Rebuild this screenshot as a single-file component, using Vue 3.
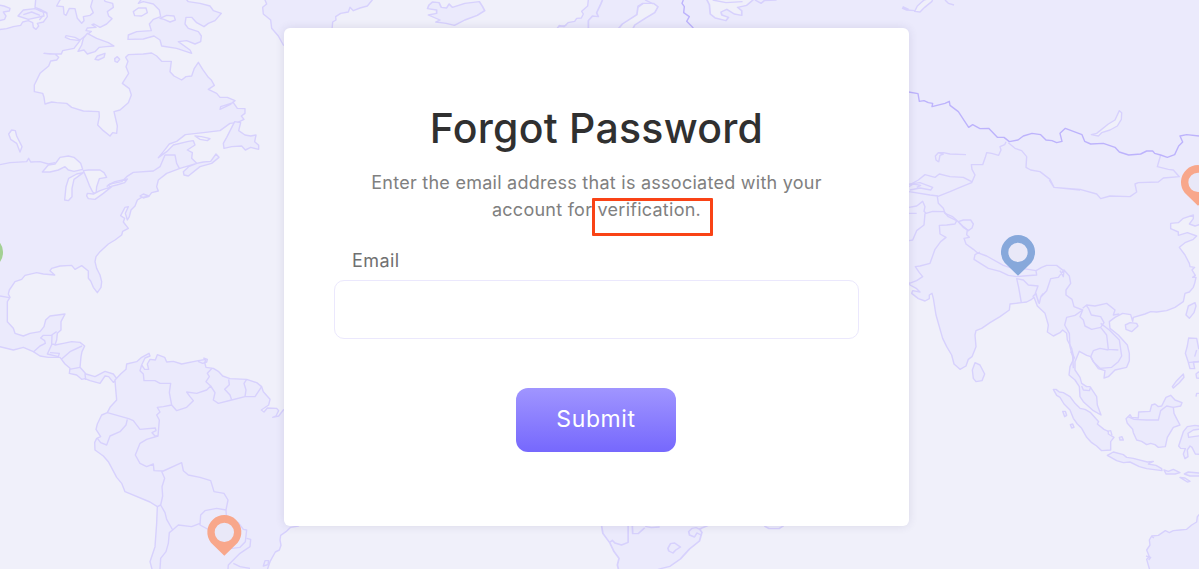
<template>
  <div class="page">
    <svg class="map" viewBox="0 0 3597 1707" aria-hidden="true">
      <g v-for="region in regions" :key="region.name" :transform="region.shift">
        <path v-for="d in region.land" :key="d" class="land" :d="d" />
        <path v-for="d in region.water" :key="d" class="water" :d="d" />
        <path v-for="d in region.borders" :key="d" class="border" :d="d" />
      </g>
      <path class="border strong" :d="russianBorder" />
      <g v-for="pin in pins" :key="pin.shift" :transform="pin.shift">
        <circle class="pin-hole" r="32" />
        <path
          :fill="pin.color"
          fill-rule="evenodd"
          d="M0 70 L-40 31 A51 51 0 1 1 40 31 Z M29 0 A29 29 0 1 0 -29 0 A29 29 0 1 0 29 0 Z"
        />
      </g>
    </svg>

    <form class="card" @submit.prevent>
      <h1 class="title">Forgot Password</h1>
      <p class="hint">
        Enter the email address that is associated with your<br />
        account for <span class="marked">verification.</span>
      </p>
      <label class="label" for="email">Email</label>
      <input id="email" v-model="email" class="input" type="email" />
      <button class="submit" type="submit">Submit</button>
    </form>
  </div>
</template>

<script setup>
import { ref } from 'vue'

const email = ref('')

const regions = [
  {
    name: 'north-america',
    shift: 'translate(0 0)',
    land: [
      'M-10 90 L20 86 40 80 62 76 68 66 85 62 98 68 100 82 108 88 116 78 112 70 130 66 142 50 140 38 125 30 105 22 107 0 V-10 H180 V0 L170 18 190 20 192 42 198 46 208 25 225 26 232 55 245 70 252 62 250 50 270 46 280 38 272 20 280 -8 H310 L315 4 338 10 340 22 322 35 326 48 336 56 320 72 300 82 282 72 276 74 288 82 262 84 258 92 274 94 240 120 225 112 198 107 196 112 210 118 240 122 222 145 188 152 184 162 150 162 132 160 165 162 176 172 170 180 152 183 146 198 120 220 103 255 103 275 128 280 132 292 135 312 155 306 170 308 200 310 215 322 250 333 297 335 298 350 293 375 310 392 330 408 338 398 350 400 352 378 342 335 360 330 385 308 394 285 388 266 367 250 376 236 386 220 378 200 384 184 377 172 385 164 430 162 455 159 470 168 485 184 514 184 510 215 522 228 545 240 558 230 575 228 583 205 595 187 608 208 625 232 634 240 643 256 625 268 650 280 660 292 682 292 705 302 690 314 660 328 662 320 700 308 712 325 735 326 735 340 724 348 732 358 712 368 690 370 660 392 610 398 556 404 530 424 508 432 490 455 475 473 500 455 520 435 565 424 580 422 585 435 562 450 577 458 575 475 590 490 610 486 632 484 648 462 657 472 635 490 600 500 565 528 552 525 550 515 566 500 590 490 540 505 500 520 475 540 470 560 475 573 455 578 446 590 425 592 412 600 405 618 393 630 388 650 382 660 376 640 385 620 375 622 362 647 374 655 370 666 385 685 368 694 365 705 345 720 325 732 300 755 288 770 285 785 290 805 300 825 305 845 303 862 292 878 280 862 272 843 265 835 265 813 245 797 225 808 215 796 180 798 155 805 150 812 164 825 130 822 110 818 75 826 65 838 45 845 28 870 25 882 30 892 22 905 22 965 40 985 45 1000 70 1008 90 1000 120 995 132 980 137 960 150 948 195 942 183 965 183 990 172 1000 170 1020 165 1035 190 1030 215 1025 240 1027 254 1038 246 1055 243 1070 240 1102 258 1122 285 1130 315 1114 340 1122 352 1138 340 1147 326 1130 315 1128 300 1150 270 1142 255 1136 245 1138 230 1125 208 1120 210 1105 195 1092 180 1072 145 1072 120 1068 100 1055 70 1042 40 1050 0 1040 -10 1040 Z',
      'M262 100 L290 115 325 128 342 138 318 140 298 142 285 155 262 162 252 150 234 154 245 135 250 115 Z',
      'M285 178 L292 168 315 160 312 172 295 180 Z',
      'M344 176 L352 170 359 178 352 187 345 184 Z',
      'M415 10 L430 5 460 12 478 30 482 50 460 58 448 72 454 92 410 95 385 105 384 118 430 117 462 108 480 120 485 138 530 145 575 160 570 150 535 125 560 122 585 132 602 125 604 108 595 95 565 85 555 72 558 52 575 52 590 68 612 80 625 70 645 62 664 40 640 32 630 18 600 10 565 5 552 -10 H430 Z',
      'M54 48 L70 30 105 26 130 36 132 48 85 58 Z',
      'M-10 14 L12 18 30 25 28 33 10 36 18 48 14 58 -10 64 Z',
      'M704 365 L722 368 716 392 735 405 752 408 768 405 764 425 776 436 776 448 752 442 736 450 725 438 695 440 672 445 670 430 680 412 Z',
      'M795 -10 L795 0 800 12 788 22 790 42 812 60 815 85 835 108 850 135 950 150 996 90 998 66 1008 60 1007 50 1022 40 1045 36 1050 22 1060 32 1080 24 1102 18 1125 -10 Z'
    ],
    water: [
      'M400 35 L415 24 438 24 442 38 425 48 404 47 Z',
      'M480 55 L500 46 522 48 526 60 510 66 492 58 Z',
      'M26 402 L35 390 46 392 50 408 66 440 60 456 50 430 32 418 Z',
      'M127 516 L145 495 165 492 180 472 205 468 222 472 242 490 248 508 222 514 205 510 195 500 175 510 150 516 Z',
      'M250 512 L265 510 300 510 312 518 320 532 298 536 290 560 288 582 278 576 268 556 258 530 Z',
      'M194 600 L198 560 206 535 230 522 250 518 222 538 216 565 216 590 205 602 Z',
      'M260 588 L262 580 280 582 300 572 335 560 310 580 285 598 265 596 Z',
      'M325 555 L345 545 382 537 374 548 350 555 330 560 Z',
      'M585 408 L605 410 630 416 622 422 600 418 Z'
    ],
    borders: [
      'M0 494 L30 488 80 485 86 475 92 486 120 485 145 492 165 488 M320 560 L330 552 365 545 380 530 400 517 460 513 480 500 495 465 525 465 530 490 538 505 M420 588 L430 582 446 588 430 594 Z',
      'M0 888 L28 893 M100 1056 L120 1038 136 1030 134 1022 122 1014 130 1006 156 1006 155 1032 166 1034 M155 1005 L170 995 M156 1032 L142 1062 175 1070 178 1060 150 1058 M184 1078 L210 1055 246 1038 M208 1108 L240 1102 M255 1120 L257 1140',
      'M70 44 L95 36 120 46 M115 30 L142 40 M118 60 L128 48'
    ]
  },
  {
    name: 'south-america',
    shift: 'translate(0 1050)',
    land: [
      'M345 90 L362 72 378 58 380 42 410 35 425 22 447 10 450 18 435 24 425 45 434 58 446 58 442 42 450 28 466 30 472 14 494 22 500 36 520 34 545 42 595 32 618 28 614 38 618 52 640 55 655 64 668 78 690 86 740 88 770 98 785 110 790 125 810 148 806 165 784 180 792 186 802 174 830 175 836 182 828 198 818 202 836 198 850 180 900 165 1000 300 1000 450 895 528 872 532 858 545 842 556 840 570 843 586 838 600 826 606 810 635 800 665 H458 L450 635 465 590 470 520 472 470 450 456 375 425 365 400 350 382 325 335 310 318 285 300 284 278 290 265 302 260 288 238 292 222 305 195 322 188 330 172 350 150 346 105 Z'
    ],
    water: [],
    borders: [
      'M425 45 L420 62 430 72 432 92 465 92 480 100 512 100 508 128 515 165 490 170 472 172 480 186 470 195 478 210 474 258 465 258 456 248 468 242 466 234 420 238 400 212 386 206 322 188 M515 165 L530 182 560 172 580 152 570 140 560 126 590 130 620 120 632 108 618 95 628 80 622 70 636 55 M632 108 L645 128 640 150 655 160 695 150 690 135 674 118 688 104 686 88 M695 150 L735 140 738 120 732 100 740 88 M735 140 L765 140 785 110',
      'M382 208 L378 225 360 245 330 258 320 285 302 278 292 265 M474 258 L440 268 420 280 406 315 420 340 440 350 460 342 462 362 490 363 545 338 550 362 565 375 600 382 632 392 642 425 672 430 684 450 678 480 680 515 715 518 730 538 740 540 736 575 720 592 672 598 680 578 665 560 600 525 602 495 615 482 650 475 678 480 M484 362 L494 385 486 410 488 438 482 465 472 470 M482 465 L495 488 500 508 518 540 508 548 505 580 498 605 482 625 480 657 M518 540 L535 525 575 530 600 520 M740 565 L752 568 750 590 720 610 685 645 684 657 M700 640 L720 650 750 655 M790 648 L795 632 806 632 804 644 Z',
      'M594 34 L608 40 620 36 622 28 610 24'
    ]
  },
  {
    name: 'eurasia',
    shift: 'translate(2700 0)',
    land: [
      'M-1032 90 L-1022 76 -1008 80 -996 68 -976 64 -970 55 -956 54 -950 42 -955 34 -937 18 -934 -10 H910 V670 L885 678 868 672 880 656 880 645 850 655 835 668 812 670 812 686 835 696 835 706 862 698 890 708 880 718 855 728 838 742 855 765 868 790 870 800 884 802 876 810 886 826 878 832 888 832 884 850 880 862 868 876 855 880 850 905 825 922 800 932 770 936 752 935 735 942 700 952 698 964 692 944 668 940 645 952 628 965 630 985 655 1005 682 1035 688 1060 688 1082 680 1102 645 1110 625 1130 612 1134 615 1112 595 1106 580 1085 572 1070 560 1066 538 1054 525 1085 525 1110 540 1132 545 1150 560 1160 570 1160 590 1190 592 1215 603 1245 580 1232 550 1205 540 1190 538 1160 525 1140 507 1125 510 1100 522 1075 515 1045 502 1020 500 1000 488 990 480 998 460 1008 442 996 445 975 435 940 412 918 402 892 395 898 380 906 365 908 330 912 328 930 300 950 270 968 245 985 228 992 225 1005 228 1040 216 1070 205 1078 198 1098 180 1108 162 1092 155 1065 140 1040 128 1015 108 945 100 895 96 880 88 885 88 896 75 903 55 896 35 880 38 872 60 876 50 866 30 855 27 848 -100 860 H-1032 Z'
    ],
    water: [
      'M44 34 L52 18 72 0 100 -8 96 4 74 22 60 36 Z',
      'M574 404 L590 400 625 372 645 360 658 332 665 338 664 358 652 378 630 390 605 398 595 408 Z'
    ],
    borders: [
      'M6 24 L20 30 45 32 M8 20 L26 28 M135 0 L145 10 162 15 M116 486 L108 480 106 468 115 458 130 462 120 466 116 486',
      'M20 553 L60 548 98 562 92 570 60 564 30 570 M27 560 L40 552 62 556 50 562',
      'M115 458 L130 458 150 462 198 464 M318 425 L314 434 300 440 303 450 296 466 275 460 260 458 256 472 248 494 214 494 216 508 225 525 215 548 180 562 150 575 112 590 115 610 130 625 135 640 158 650 175 665 190 660 212 660 220 672 216 684 205 692 190 680 175 665 M215 545 L190 532 150 530 118 522 105 532 75 524 55 540 28 555 M325 428 L345 445 365 452 380 470 378 502 392 510 420 515 450 538 462 562 540 570 M448 540 L462 562 540 568 590 582 602 596 630 588 690 590 710 576 705 552 715 548 775 546 790 534 838 530 820 510 805 508 772 500 782 465',
      'M27 575 L90 585 114 588 M27 622 L50 618 68 604 75 620 72 634 78 640 98 634 132 635 M75 640 L72 675 50 692 38 720 27 722 M27 640 H50 M132 635 L145 650 170 662 165 672 140 675 118 676 120 702 138 712 122 725 105 748 90 790 60 798 46 800 58 818 68 830 50 842 28 850 M175 665 L190 682 202 690 200 704 208 712 192 715 198 732 220 748 232 758 260 768 310 796 340 806 M240 756 L225 764 222 778 265 805 300 814 325 826 350 830 M340 806 L370 806 385 808 408 812 410 825 370 828 350 830 M408 812 L425 802 440 796 470 796 490 812 475 832 452 836 440 872 422 892 418 910 406 880 414 858 385 855 370 840 350 836 356 862 364 908 M398 890 L408 880 416 910 M422 890 L430 880 M480 812 L490 830 492 810 508 828 512 850 498 870 498 885 516 898 522 920 548 930 525 946 500 952 494 975 508 1000 510 1040 518 1070 520 1105 M548 925 L560 915 585 918 620 910 645 930 640 945 658 942 M560 918 L566 926 574 945 602 950 612 968 602 982 575 988 555 978 550 960 540 950 548 930 M602 982 L620 1005 625 1048 655 1050 M625 1050 L600 1045 580 1052 572 1070 580 1085 600 1105 635 1102 655 1085 665 1068 658 1020 628 990 602 970',
      'M512 1055 L524 1075 M545 1158 L550 1170 568 1172 572 1162'
    ]
  },
  {
    name: 'north-atlantic',
    shift: 'translate(810 0) scale(1.2436 1)',
    land: [
      'M383 16 L392 6 408 8 413 22 426 24 432 12 440 22 470 10 505 5 512 18 518 32 500 46 470 60 445 76 425 70 400 66 410 60 382 45 402 40 402 30 380 26 Z'
    ],
    water: [
      'M838 90 L850 72 885 44 888 18 900 10 925 10 936 20 928 38 905 55 880 75 870 100 Z',
      'M1050 -10 L1060 14 1062 42 1074 54 1100 62 1106 52 1090 45 1088 36 1102 28 1120 42 1138 46 1138 32 1128 22 1150 16 1165 0 1165 -10 Z'
    ],
    borders: [
      'M768 84 L768 62 778 48 792 50 788 38 798 12 802 0 M888 22 L900 10 M905 0 L925 12 M1068 0 L1100 8 1140 5 M1170 0 L1185 10 1192 2 1222 0 M695 80 L715 76'
    ]
  },
  {
    name: 'oceania',
    shift: 'translate(2700 1050)',
    land: [
      'M460 118 L468 118 478 126 490 128 510 140 525 160 540 175 555 178 572 188 596 215 592 222 612 238 625 244 625 252 642 262 632 275 632 300 605 302 590 288 575 278 560 262 545 235 532 222 520 205 510 180 492 162 480 142 470 136 Z',
      'M622 316 L640 306 670 314 680 322 700 325 742 336 760 334 745 342 768 346 785 356 786 362 740 356 718 350 690 336 670 338 650 332 Z',
      'M678 206 L690 194 695 202 715 204 716 186 750 184 755 165 765 162 775 170 785 168 798 142 812 136 825 150 846 158 842 168 820 172 822 190 828 202 840 225 820 232 802 262 796 290 775 292 765 284 752 280 740 284 725 274 710 270 700 248 698 238 682 220 Z',
      'M217 60 L225 38 240 45 254 72 246 92 228 95 220 85 Z',
      'M836 288 L850 245 862 230 885 226 910 230 V236 L880 240 864 250 866 262 880 260 910 256 V314 L886 312 876 292 870 288 862 300 864 320 855 326 850 312 856 296 842 295 Z',
      'M910 480 L892 500 890 516 875 525 860 538 840 540 820 542 808 548 796 542 775 556 755 558 748 570 750 585 740 600 748 620 740 628 752 670 H910 Z',
      'M488 184 L496 184 500 196 494 200 Z',
      'M511 224 L518 222 522 232 515 234 Z',
      'M658 262 L666 260 670 270 660 270 Z',
      'M792 360 L805 364 820 358 840 368 825 372 798 372 Z',
      'M853 372 L865 366 910 370 V378 L870 378 Z',
      'M840 382 L855 384 870 394 862 396 Z',
      'M817 110 L830 92 850 72 852 82 838 98 820 114 Z',
      'M866 -36 L890 -35 896 -5 910 10 V35 L880 36 884 56 870 56 864 34 856 10 862 -12 Z',
      'M858 -105 L865 -132 885 -142 888 -132 882 -112 868 -95 Z',
      'M676 -75 L690 -82 710 -80 714 -72 695 -55 678 -62 Z',
      'M888 72 L895 66 910 70 V86 L890 84 Z'
    ],
    water: [],
    borders: [
      'M684 200 L702 208 740 210 775 210 782 182 800 168 820 172 M864 38 L900 34 M884 20 L890 0 M888 140 L890 130 900 130 M622 244 L632 242 636 256 M755 560 L762 564 M738 618 L752 622 746 630'
    ]
  },
  {
    name: 'southern-africa',
    shift: 'translate(810 1545) scale(1.2436 1)',
    land: [
      'M800 20 L800 33 803 55 820 84 830 110 842 130 838 150 842 170 H920 L945 160 965 154 990 132 1012 102 1036 78 1042 52 1036 42 1056 32 1056 20 Z',
      'M1190 25 L1194 34 1204 41 1228 41 1238 33 1240 25 Z'
    ],
    water: [],
    borders: [
      'M820 82 L826 76 832 84 848 90 864 82 864 28 M874 30 L875 56 888 56 904 38 M905 34 L920 38 940 36 M960 100 L966 86 976 84 990 96 978 106 972 114 962 108 Z M1040 45 L1028 38 1018 40 1010 50 1012 60 1024 66 1030 54 1040 60'
    ]
  }
]

const russianBorder =
  'M2726 276 L2754 281 2758 304 2772 302 2785 308 2798 310 2796 320 2835 310 2848 304 2850 316 2875 335 2906 382 2918 374 2940 386 2966 385 2992 412 3012 412 3028 425 3054 420 3070 408 3096 400 3122 404 3138 420 3156 422 3170 428 3186 424 3180 400 3196 385 3246 404 3254 424 3272 432 3310 430 3345 442 3358 456 3386 465 3422 462 3440 453 3458 453 3464 460 3482 465 3502 472 3524 464 3536 438 3548 426 3540 408 3560 404 3597 408 M2050 0 L2046 10 2053 20 2051 38 2068 50 2060 64 2080 84'

const pins = [
  { color: '#f8a78b', shift: 'translate(673 1597)' },
  { color: '#87a8db', shift: 'translate(3054 757)' },
  { color: '#f8a78b', shift: 'translate(3594 547)' },
  { color: '#a3d094', shift: 'translate(-42 758)' }
]
</script>

<style>
body {
  margin: 0;
}
</style>

<style scoped>
.page {
  position: relative;
  height: 569px;
  padding: 28px 290px 0 284px;
  box-sizing: border-box;
  overflow: hidden;
  background: #f0f0fa;
  font-family: Inter, 'Open Sans', sans-serif;
}
.map {
  position: absolute;
  top: 0;
  left: 0;
  width: 1199px;
  height: 569px;
}
.land,
.water,
.border {
  stroke: #d7d1fd;
  stroke-width: 4.2;
  stroke-linejoin: round;
}
.land {
  fill: #ebeafc;
}
.water {
  fill: #f0f0fa;
}
.border {
  fill: none;
}
.strong {
  stroke: #bdb3fc;
}
.pin-hole {
  fill: #e9e8f8;
}
.card {
  position: relative;
  display: flex;
  flex-direction: column;
  align-items: center;
  width: 625px;
  height: 498px;
  padding: 75px 50px 0;
  box-sizing: border-box;
  background: #fff;
  border-radius: 6px;
  box-shadow: 0 0 10px rgba(60, 50, 110, 0.12);
}
.title {
  margin: 0;
  line-height: 50px;
  font-size: 41px;
  font-weight: 500;
  letter-spacing: 0.25px;
  color: #303030;
}
.hint {
  margin: 16px 0 0;
  font-size: 18px;
  line-height: 27px;
  letter-spacing: 0.26px;
  text-align: center;
  white-space: nowrap;
  color: #808080;
}
.marked {
  position: relative;
}
/* red frame lying over the end of the sentence */
.marked::after {
  content: '';
  position: absolute;
  top: -1px;
  left: -6px;
  width: 115px;
  height: 32px;
  border: 3px solid #f94316;
  border-radius: 1px;
}
.label {
  align-self: flex-start;
  margin: 24px 0 0 18px;
  font-size: 18px;
  line-height: 27px;
  letter-spacing: 0.4px;
  color: #707070;
}
.input {
  width: 525px;
  height: 59px;
  margin-top: 6px;
  padding: 0 18px;
  box-sizing: border-box;
  border: 1px solid #ebe8fd;
  border-radius: 10px;
  outline: none;
  background: #fff;
  font: inherit;
}
.submit {
  width: 160px;
  height: 64px;
  margin: 49px 1px 0 0;
  padding: 0 0 2px;
  border: 0;
  border-radius: 12px;
  background: linear-gradient(#a095ff, #7668fd);
  font-family: inherit;
  font-size: 23px;
  letter-spacing: 0.6px;
  color: #fff;
}
</style>
